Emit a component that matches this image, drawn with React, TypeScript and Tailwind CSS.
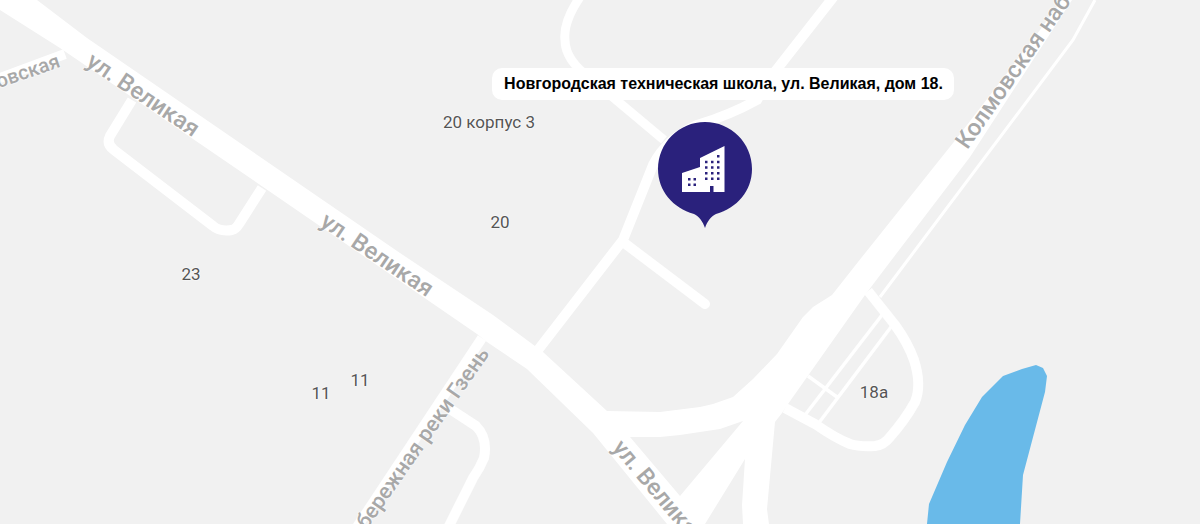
import React from 'react';

const ROAD = '#ffffff';

type Label = { text: string; x: number; y: number; angle: number; size: number };

// street names sit on the map at their own angle
const streetLabels: Label[] = [
  { text: 'ул. Великая', x: 143, y: 95, angle: 34, size: 23.5 },
  { text: 'ул. Великая', x: 377, y: 255, angle: 34, size: 23.5 },
  { text: 'ул. Великая', x: 659, y: 493, angle: 50, size: 23.5 },
  { text: 'Колмовская набережная', x: 1041, y: 32, angle: -55, size: 23.5 },
  { text: 'Набережная реки Гзень', x: 415, y: 449, angle: -55, size: 21.5 },
  { text: 'Колмовская', x: 4, y: 79, angle: -19, size: 20 },
];

const houseNumbers = [
  { text: '20 корпус 3', x: 489, y: 122 },
  { text: '20', x: 500, y: 222 },
  { text: '23', x: 191, y: 274 },
  { text: '11', x: 360, y: 380 },
  { text: '11', x: 321, y: 393 },
  { text: '18а', x: 874, y: 392 },
];

const MapRoads = () => (
  <svg className="absolute inset-0" width="1200" height="524" viewBox="0 0 1200 524" fill="none">
    {/* ул. Великая, its branch and Колмовская набережная are one white shape */}
    <path
      fillRule="evenodd"
      fill={ROAD}
      d="M0 0H37L87 38L400 253L493 315L543 352L607 411L660 412L700 407L713 404L733 397L753 379L777 354L803 317L813 307L832 295L858 262L957 138L1040 30L1062 0H1072L970 157L890 262L865 295L788 404L782 413L775 422L767 509L769 524H743L742 505L745 459L705 524H667L593 433L527 369L487 342L477 334L253 180L60 48L0 10ZM630 437L660 437L680 435L720 429L743 421L680 496Z"
    />

    <path d="M1095 0L1073 40L880 297" stroke={ROAD} strokeWidth="3" />
    <path
      d="M868 291L895 325Q908 343 914 360Q922 385 915 402Q905 420 890 437Q884 445 875 446Q860 447 850 444Q835 438 815 424L785 408"
      stroke={ROAD}
      strokeWidth="10"
    />
    <path d="M882 315L805 415M891 327L818 424M808 376L837 397" stroke={ROAD} strokeWidth="3.500" />

    {/* side roads around the school */}
    <path d="M835 -5L770 78L757 100Q730 115 697 125Q665 140 653 165L623 240L538 350" stroke={ROAD} strokeWidth="10" />
    <path d="M580 -3Q563 22 565 40Q565 60 590 78L664 140" stroke={ROAD} strokeWidth="9" />
    <path d="M623 242L705 304" stroke={ROAD} strokeWidth="10" strokeLinecap="round" />

    {/* left side */}
    <path d="M65 54L0 78" stroke={ROAD} strokeWidth="10" />
    <path d="M132 100L110 136Q106 144 114 150L213 226Q220 232 232 230Q236 229 239 224L262 188" stroke={ROAD} strokeWidth="10" />
    <path d="M482 338L355 530" stroke={ROAD} strokeWidth="10" />
    <path d="M450 409L476 426Q488 438 484 458Q480 468 473 478L447 530" stroke={ROAD} strokeWidth="10" />

    {/* water */}
    <path
      d="M927 524L929 504L947 462L965 425L982 397L1003 376L1022 369L1036 365L1043 368L1047 376L1045 392L1023 475L1020 524Z"
      fill="#69BAE9"
    />
  </svg>
);

const SchoolPin = () => (
  <svg
    className="absolute left-[658px] top-[122px]"
    width="94"
    height="106"
    viewBox="0 0 94 106"
    fill="none"
  >
    <path
      d="M47 0C21 0 0 21 0 47C0 69 15 86 36 92C41 94 45 100 47 106C49 100 53 94 58 92C79 86 94 69 94 47C94 21 73 0 47 0Z"
      fill="#2A217C"
    />
    <path
      fill="#ffffff"
      fillRule="evenodd"
      d="M24 70V51L42 45V36L66.500 24V70H55.500V64H52V70ZM30 56V58.500H32.500V56ZM35.500 56V58.500H38V56ZM30 61.500V64H32.500V61.500ZM35.500 61.500V64H38V61.500ZM59 33V35.500H61.500V33ZM47 38.700V41.200H49.500V38.700ZM53 38.700V41.200H55.500V38.700ZM59 38.700V41.200H61.500V38.700ZM47 44.300V46.800H49.500V44.300ZM53 44.300V46.800H55.500V44.300ZM59 44.300V46.800H61.500V44.300ZM47 50V52.500H49.500V50ZM53 50V52.500H55.500V50ZM59 50V52.500H61.500V50ZM47 55.500V58H49.500V55.500ZM53 55.500V58H55.500V55.500ZM59 55.500V58H61.500V55.500Z"
    />
  </svg>
);

const App: React.FC = () => {
  return (
    <div className="relative w-[1200px] h-[524px] overflow-hidden bg-[#f1f1f1] font-['Roboto',sans-serif]">
      <MapRoads />

      {streetLabels.map((l) => (
        <span
          key={l.text + l.x}
          className="absolute whitespace-nowrap font-medium text-[#a8a8a8] -translate-x-1/2 -translate-y-1/2 [text-shadow:0_0_2px_#fff,0_0_2px_#fff]"
          style={{ left: l.x, top: l.y, fontSize: l.size, rotate: `${l.angle}deg` }}
        >
          {l.text}
        </span>
      ))}

      {houseNumbers.map((n) => (
        <span
          key={n.text + n.x}
          className="absolute whitespace-nowrap text-[17px] leading-none text-[#555555] -translate-x-1/2 -translate-y-1/2 [text-shadow:0_0_2px_#fff,0_0_2px_#fff]"
          style={{ left: n.x, top: n.y }}
        >
          {n.text}
        </span>
      ))}

      <div className="absolute left-[492px] top-[68px] flex h-[32px] w-[462px] items-center justify-center rounded-[10px] bg-white pl-[1px] font-['Liberation_Sans',sans-serif] text-[16px] font-bold text-black">
        Новгородская техническая школа, ул. Великая, дом 18.
      </div>

      <SchoolPin />
    </div>
  );
};

export default App;
